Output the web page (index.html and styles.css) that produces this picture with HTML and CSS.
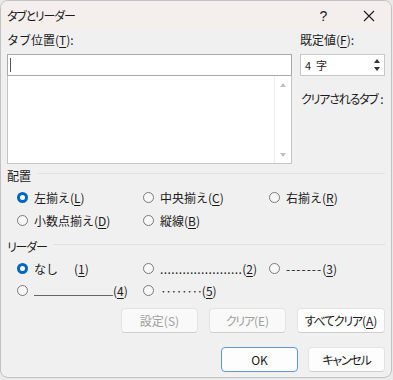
FILE: index.html
```html
<!DOCTYPE html>
<html lang="ja">
<head>
  <meta charset="UTF-8">
  <title>タブとリーダー</title>
  <link rel="stylesheet" href="styles.css">
</head>
<body>
  <div class="window">
    <div class="titlebar">
      <div class="title"><span class="kana">タブとリーダー</span></div>
      <div class="tbtn help">?</div>
      <div class="tbtn close">
        <svg width="12" height="12" viewBox="0 0 12 12"><path d="M1 1 L11 11 M11 1 L1 11" stroke="#1b1b1b" stroke-width="1.1" fill="none"/></svg>
      </div>
    </div>

    <div class="content">
      <div class="top">
        <div class="left">
          <div class="label">タブ位置(<u>T</u>):</div>
          <div class="input"><span class="caret"></span></div>
          <div class="list">
            <div class="scroll">
              <span class="arr up"></span>
              <span class="arr down"></span>
            </div>
          </div>
        </div>
        <div class="right">
          <div class="label">既定値(<u>F</u>):</div>
          <div class="spin">
            <span class="spin-val">4&nbsp;&nbsp;字</span>
            <div class="spin-btns">
              <span class="sarr up"></span>
              <span class="sarr down"></span>
            </div>
          </div>
          <div class="cleared"><span class="kana">クリアされるタブ</span> :</div>
        </div>
      </div>

      <div class="group">
        <div class="group-head"><span>配置</span><i></i></div>
        <div class="radios">
          <div class="radio on"><span class="dot"></span><span>左揃え(<u>L</u>)</span></div>
          <div class="radio"><span class="dot"></span><span>中央揃え(<u>C</u>)</span></div>
          <div class="radio"><span class="dot"></span><span>右揃え(<u>R</u>)</span></div>
          <div class="radio"><span class="dot"></span><span>小数点揃え(<u>D</u>)</span></div>
          <div class="radio"><span class="dot"></span><span>縦線(<u>B</u>)</span></div>
        </div>
      </div>

      <div class="group leader">
        <div class="group-head"><span class="kana">リーダー</span><i></i></div>
        <div class="radios">
          <div class="radio on"><span class="dot"></span><span>なし<span class="num">(<u>1</u>)</span></span></div>
          <div class="radio"><span class="dot"></span><span><span class="dots">......................</span>(<u>2</u>)</span></div>
          <div class="radio"><span class="dot"></span><span><span class="dash">-------</span>(<u>3</u>)</span></div>
          <div class="radio"><span class="dot"></span><span><span class="line"></span>(<u>4</u>)</span></div>
          <div class="radio"><span class="dot"></span><span><span class="mid">········</span>(<u>5</u>)</span></div>
        </div>
      </div>

      <div class="buttons">
        <div class="btn off">設定(S)</div>
        <div class="btn off"><span class="kana">クリア</span>(E)</div>
        <div class="btn wide"><span class="kana">すべてクリア</span>(<u>A</u>)</div>
      </div>
      <div class="buttons bottom">
        <div class="btn default">OK</div>
        <div class="btn"><span class="kana">キャンセル</span></div>
      </div>
    </div>
  </div>
</body>
</html>
```

FILE: styles.css
```css
* {
  margin: 0;
  padding: 0;
  box-sizing: border-box;
}
html,
body {
  width: 100%;
  height: 100%;
  background-color: #e9e9e9;
  font-family: "Noto Sans CJK JP", sans-serif;
  font-size: 12px;
  color: #1b1b1b;
}
u {
  text-underline-offset: 2px;
}
.kana {
  font-feature-settings: "palt";
  letter-spacing: -1.2px;
}

.window {
  width: 392px;
  height: 378px;
  border: 1px solid #c2c2c2;
  border-radius: 8px;
  overflow: hidden;
  background-color: #f0f0f0;
}

.titlebar {
  height: 29px;
  display: flex;
  align-items: center;
  background-color: #f4eeec;
}
.titlebar .title {
  flex: 1;
  padding-left: 6px;
}
.titlebar .tbtn {
  width: 45px;
  height: 29px;
  display: flex;
  align-items: center;
  justify-content: center;
  font-size: 14px;
  font-family: "Liberation Sans", sans-serif;
}

.content {
  padding: 0 6px;
}

.top {
  display: flex;
  gap: 8px;
}
.top .left {
  flex: none;
  width: 285px;
}
.top .right {
  flex: 1;
  min-width: 0;
}
.label {
  height: 16px;
  line-height: 16px;
  margin: 2px 0 6px;
  white-space: nowrap;
}
.input {
  height: 22px;
  background-color: #fff;
  border: 1px solid #a9a9a9;
  display: flex;
  align-items: center;
  padding-left: 2px;
}
.caret {
  width: 1px;
  height: 14px;
  background-color: #555;
}
.list {
  height: 89px;
  margin-top: -1px;
  background-color: #fff;
  border: 1px solid #c4c4c4;
  border-top-color: #a9a9a9;
  display: flex;
  justify-content: flex-end;
}
.scroll {
  width: 17px;
  border-left: 1px solid #ececec;
  display: flex;
  flex-direction: column;
  justify-content: space-between;
  align-items: center;
  padding: 7px 0 6px;
}
.arr {
  width: 0;
  height: 0;
  border-left: 3px solid transparent;
  border-right: 3px solid transparent;
}
.arr.up {
  border-bottom: 4px solid #c0c0c0;
}
.arr.down {
  border-top: 4px solid #c0c0c0;
}

.spin {
  height: 22px;
  width: 85px;
  background-color: #fff;
  border: 1px solid #c8c8c8;
  display: flex;
  align-items: center;
  justify-content: space-between;
  padding-left: 4px;
}
.spin-val {
  font-size: 11px;
}
.spin-btns {
  width: 15px;
  height: 20px;
  display: flex;
  flex-direction: column;
  align-items: center;
  justify-content: space-around;
  padding: 2px 0;
}
.sarr {
  width: 0;
  height: 0;
  border-left: 3px solid transparent;
  border-right: 3px solid transparent;
}
.sarr.up {
  border-bottom: 4px solid #333;
}
.sarr.down {
  border-top: 4px solid #333;
}
.cleared {
  margin-top: 14px;
  margin-left: 1px;
  white-space: nowrap;
}

.group {
  margin-top: 3px;
}
.group-head {
  display: flex;
  align-items: center;
  gap: 6px;
  height: 16px;
}
.group-head i {
  flex: 1;
  height: 1px;
  margin-top: -4px;
  background-color: #e2e2e2;
}
.radios {
  display: grid;
  grid-template-columns: 126px 126px 1fr;
  margin: 3px 0 0 10px;
}
.radio {
  height: 23px;
  display: flex;
  align-items: center;
  gap: 6px;
  white-space: nowrap;
}
.radio .dot {
  width: 11px;
  height: 11px;
  border-radius: 50%;
  border: 1px solid #7a7a7a;
  background-color: #f7f7f7;
  flex-shrink: 0;
}
.radio.on .dot {
  border: 3px solid #0067c0;
  background-color: #fff;
}
.radio .num {
  margin-left: 16px;
}
.radio .line {
  display: inline-block;
  width: 79px;
  height: 12px;
  vertical-align: baseline;
  border-bottom: 1px solid #666;
}
.radio .dots {
  letter-spacing: 0.4px;
}
.radio .dash {
  letter-spacing: 1px;
}
.radio .mid {
  letter-spacing: -1.5px;
}

.group.leader {
  margin-top: 6px;
}
.leader .radio {
  height: 22px;
}

.buttons {
  display: flex;
  justify-content: flex-end;
  gap: 11px;
  margin-top: 7px;
}
.buttons.bottom {
  gap: 10px;
  margin-top: 14px;
}
.btn {
  width: 77px;
  height: 25px;
  display: flex;
  align-items: center;
  justify-content: center;
  background-color: #fdfdfd;
  border: 1px solid #e3e3e3;
  border-bottom-color: #cfcfcf;
  border-radius: 4px;
}
.btn.wide {
  width: 88px;
}
.btn.off {
  color: #a0a0a0;
  background-color: #f9f9f9;
}
.btn.default {
  border: 1px solid #5a9ad6;
}
```
